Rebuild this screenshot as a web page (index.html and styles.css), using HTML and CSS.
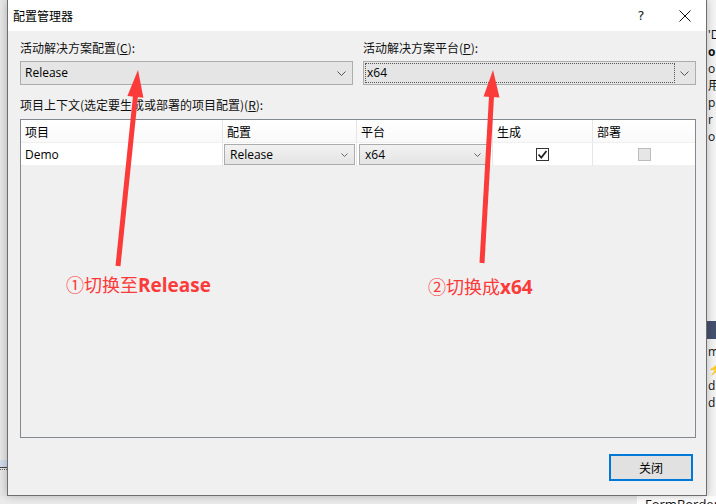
FILE: index.html
```html
<!DOCTYPE html>
<html>
<head>
<meta charset="utf-8">
<link rel="stylesheet" href="styles.css">
</head>
<body>
<div class="screen">
  <div class="left-strip"><div class="sel"></div><div class="dots"></div></div>
  <div class="dialog">
    <div class="titlebar">
      <span class="title">配置管理器</span>
      <span class="help">?</span>
      <span class="close"><svg width="12" height="12" viewBox="0 0 12 12"><path d="M0.5 0.5L11.5 11.5M11.5 0.5L0.5 11.5" stroke="#111" stroke-width="1" fill="none"/></svg></span>
    </div>
    <div class="content">
      <div class="top-row">
        <div class="field">
          <div class="label">活动解决方案配置(<u>C</u>):</div>
          <div class="combo"><span class="combo-text">Release</span><svg class="chev" width="9" height="5" viewBox="0 0 9 5"><path d="M0.5 0.5L4.5 4.5L8.5 0.5" stroke="#555" fill="none"/></svg></div>
        </div>
        <div class="field">
          <div class="label">活动解决方案平台(<u>P</u>):</div>
          <div class="combo"><span class="combo-text focus">x64</span><svg class="chev" width="9" height="5" viewBox="0 0 9 5"><path d="M0.5 0.5L4.5 4.5L8.5 0.5" stroke="#555" fill="none"/></svg></div>
        </div>
      </div>
      <div class="ctx-label">项目上下文(选定要生成或部署的项目配置)(<u>R</u>):</div>
      <div class="grid">
        <div class="grid-head">
          <div class="cell">项目</div>
          <div class="cell">配置</div>
          <div class="cell">平台</div>
          <div class="cell">生成</div>
          <div class="cell">部署</div>
        </div>
        <div class="grid-row">
          <div class="cell">Demo</div>
          <div class="cell cc"><div class="mini-combo"><span>Release</span><svg width="7" height="4" viewBox="0 0 7 4"><path d="M0.5 0.5L3.5 3.5L6.5 0.5" stroke="#666" fill="none"/></svg></div></div>
          <div class="cell cc2"><div class="mini-combo"><span>x64</span><svg width="7" height="4" viewBox="0 0 7 4"><path d="M0.5 0.5L3.5 3.5L6.5 0.5" stroke="#666" fill="none"/></svg></div></div>
          <div class="cell center"><span class="check"><svg width="11" height="11" viewBox="0 0 11 11"><path d="M1.5 5.5L4.3 8.5L9.5 2" stroke="#222" stroke-width="1.8" fill="none"/></svg></span></div>
          <div class="cell center"><span class="check disabled"></span></div>
        </div>
      </div>
      <div class="footer"><div class="btn">关闭</div></div>
    </div>
  </div>
  <div class="right-strip">
    <div class="rl">'D</div>
    <div class="rl bold">o</div>
    <div class="rl">o</div>
    <div class="rl">用</div>
    <div class="rl">pp</div>
    <div class="rl">r</div>
    <div class="rl">o</div>
    <div class="band"></div>
    <div class="rl">m</div>
    <div class="rl bolt">⚡</div>
    <div class="rl">d</div>
    <div class="rl">d</div>
  </div>
  <div class="bottom-strip"><div class="navy"></div><div class="formborder">FormBorder</div></div>

  <svg class="annot" width="716" height="504" viewBox="0 0 716 504">
    <line x1="118" y1="266" x2="135.6" y2="95" stroke="#fb3a3a" stroke-width="5"/>
    <polygon points="138,70 143.4,97.7 127.4,96.1" fill="#fb3a3a"/>
    <line x1="482" y1="263" x2="491.6" y2="95" stroke="#fb3a3a" stroke-width="5"/>
    <polygon points="493,70 499.5,97.4 483.6,96.5" fill="#fb3a3a"/>
  </svg>
  <div class="note note1">①切换至<b>Release</b></div>
  <div class="note note2">②切换成<b>x64</b></div>
</div>
</body>
</html>
```

FILE: styles.css
```css
* { box-sizing: border-box; }
html, body { margin: 0; padding: 0; }
body {
  width: 716px;
  height: 504px;
  overflow: hidden;
  font-family: "Open Sans", "Noto Sans CJK SC", sans-serif;
  font-size: 12px;
  color: #000;
  background: #e8e8e8;
}
.screen {
  position: relative;
  width: 716px;
  height: 504px;
  display: grid;
  grid-template-columns: 7px 700px 9px;
  grid-template-rows: 496px 8px;
}
.left-strip {
  grid-column: 1; grid-row: 1;
  background: #e6e6e6;
  display: flex;
  flex-direction: column;
  justify-content: flex-end;
  padding-bottom: 26px;
}
.left-strip .sel { height: 7px; background: #cfdcea; }
.left-strip .dots { height: 3px; border-top: 1px solid #444; border-bottom: 1px dotted #666; }

.dialog {
  grid-column: 2; grid-row: 1;
  background: #f0f0f0;
  border: 1px solid #6e6e6e;
  border-top: none;
  box-shadow: 0 0 8px rgba(0,0,0,0.25);
  display: flex;
  flex-direction: column;
  z-index: 1;
}
.titlebar {
  height: 31px;
  background: #fff;
  display: flex;
  align-items: center;
  padding-left: 5px;
  font-family: "Noto Sans CJK SC", sans-serif;
}
.title { flex: 1; font-size: 12px; color: #000; }
.help { width: 20px; font-family: "DejaVu Sans", sans-serif; font-size: 13px; margin-right: 28px; text-align: center; color: #222; }
.close { width: 12px; height: 12px; display: flex; margin-right: 15px; }

.content {
  flex: 1;
  display: flex;
  flex-direction: column;
  padding: 8px 10px 14px 12px;
}
.top-row {
  display: grid;
  grid-template-columns: 333px 333px;
  column-gap: 10px;
}
.label, .ctx-label {
  height: 17px;
  line-height: 17px;
  font-family: "Noto Sans CJK SC", sans-serif;
  font-size: 12px;
  color: #111;
}
.label { margin-bottom: 5px; }
u { text-decoration: underline; text-underline-offset: 1px; }
.combo {
  height: 24px;
  background: #e5e5e5;
  border: 1px solid #adadad;
  display: flex;
  align-items: center;
  padding: 1px 0 1px 1px;
}
.combo-text {
  flex: 1;
  height: 20px;
  line-height: 18px;
  padding-left: 2px;
  margin-right: 5px;
  border: 1px dotted transparent;
  color: #000;
}
.combo-text.focus { border-color: #555; padding-left: 1px; }
.chev { margin-right: 6px; }
.ctx-label { margin-top: 11px; margin-bottom: 6px; }

.grid {
  height: 319px;
  border: 1px solid #828790;
  background: #f0f0f0;
  display: flex;
  flex-direction: column;
}
.grid-head, .grid-row {
  display: grid;
  grid-template-columns: 202px 134px 136px 100px 1fr;
  height: 23px;
  background: #fff;
  border-bottom: 1px solid #f0f0f0;
}
.grid-head { background: linear-gradient(#fff, #f9f9f9); }
.cell {
  border-right: 1px solid #e6e6e6;
  display: flex;
  align-items: center;
  padding-left: 4px;
  font-family: "Open Sans", "Noto Sans CJK SC", sans-serif;
  font-size: 12px;
  color: #000;
}
.grid-head .cell { font-family: "Noto Sans CJK SC", sans-serif; }
.cell:last-child { border-right: none; }
.cell.cc { padding: 1px 1px 1px 1px; }
.cell.cc2 { padding: 1px 4px 1px 2px; }
.cell.center { justify-content: center; padding-left: 0; }
.mini-combo {
  flex: 1;
  height: 21px;
  border: 1px solid #acacac;
  background: linear-gradient(#f2f2f2, #e4e4e4);
  display: flex;
  align-items: center;
  padding: 0 6px 0 5px;
}
.mini-combo span { flex: 1; }
.check {
  width: 13px; height: 13px;
  border: 1px solid #333;
  background: #fff;
  display: flex;
  align-items: center;
  justify-content: center;
}
.check.disabled { border-color: #bcbcbc; background: #e6e6e6; }

.footer {
  margin-top: auto;
  display: flex;
  justify-content: flex-end;
  padding-right: 3px;
}
.btn {
  width: 84px;
  height: 27px;
  border: 2px solid #0078d7;
  background: #e1e1e1;
  display: flex;
  align-items: center;
  justify-content: center;
  font-family: "Noto Sans CJK SC", sans-serif;
  font-size: 12px;
}

.right-strip {
  grid-column: 3; grid-row: 1;
  background: #f3f3f3;
  overflow: hidden;
  padding-top: 26px;
  font-family: "Open Sans", "Noto Sans CJK SC", sans-serif;
  font-size: 12px;
  line-height: 17px;
  color: #111;
}
.rl { white-space: nowrap; padding-left: 1px; }
.rl.bold { font-weight: bold; }
.band { height: 18px; background: #44506e; margin: 176px 0 4px; }
.bolt { color: #d89b1a; }
.bottom-strip {
  grid-column: 1 / 4; grid-row: 2;
  background: #ebebeb;
  display: flex;
  overflow: hidden;
}
.navy { width: 7px; margin-left: 616px; background: #2f3a55; }
.formborder {
  margin-left: 21px;
  flex: 1;
  background: #fff;
  font-family: "Open Sans", sans-serif;
  font-size: 13px;
  line-height: 16px;
  padding-left: 8px;
  color: #111;
}

.annot { position: absolute; left: 0; top: 0; z-index: 5; pointer-events: none; }
.note {
  position: absolute;
  z-index: 6;
  color: #fb3a3a;
  font-family: "Noto Sans CJK SC", sans-serif;
  font-size: 18px;
  line-height: 22px;
  white-space: nowrap;
}
.note b { font-family: "Open Sans", "Noto Sans CJK SC", sans-serif; font-weight: 700; font-size: 19px; }
.note1 { left: 66px; top: 273px; }
.note2 { left: 428px; top: 275px; }
```
